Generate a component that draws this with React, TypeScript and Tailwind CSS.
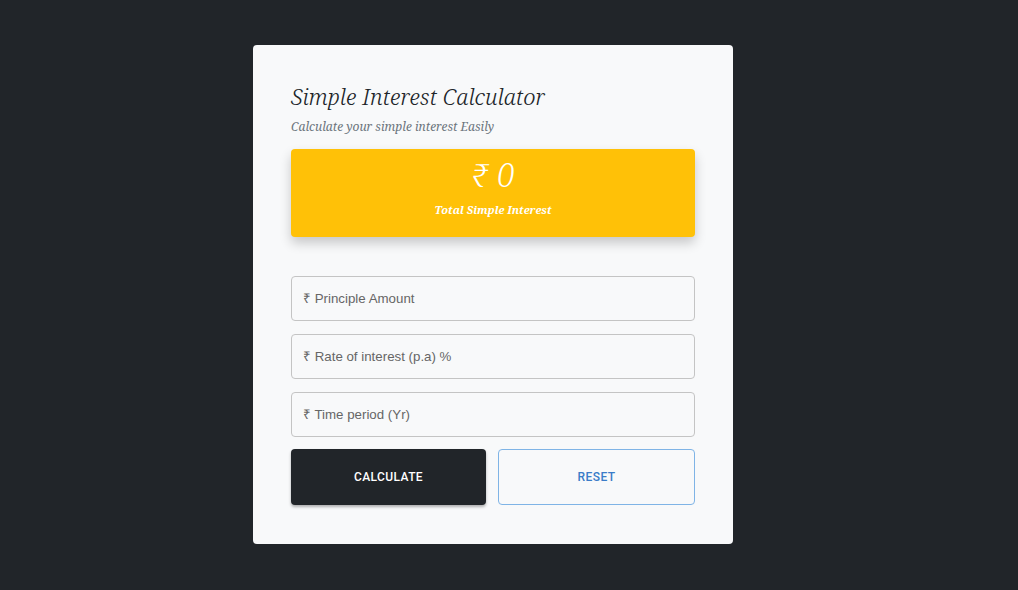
import React from "react";

export default function App() {
  const serif = { fontFamily: '"Noto Serif", "DejaVu Serif", serif', fontStretch: "87.5%" };
  return (
    <div className="min-h-[590px] w-full bg-[#212529] flex justify-center pt-[45px] pr-[32px]" style={{ fontFamily: 'Roboto, "Liberation Sans", sans-serif' }}>
      <div className="w-[480px] h-[499px] bg-[#f8f9fa] rounded-[4px] px-[38px] pt-[37px]">
        <h1 className="italic text-[22.4px] leading-[30px] text-[#212529] font-light" style={serif}>Simple Interest Calculator</h1>
        <p className="italic text-[12px] leading-[18px] mt-[6px] text-[#6c757d]" style={serif}>Calculate your simple interest Easily</p>
        <div className="mt-[13px] h-[88px] bg-[#ffc107] rounded-[4px] shadow-[0_6px_12px_rgba(0,0,0,0.2)] flex flex-col items-center text-white">
          <div className="italic font-light text-[32px] leading-[40px] mt-[6px]" style={{ fontFamily: '"Noto Serif", "DejaVu Serif", serif' }}>₹ 0</div>
          <div className="italic font-bold text-[11px] leading-[18px] mt-[6px]" style={serif}>Total Simple Interest</div>
        </div>
        <div className="mt-[39px] flex flex-col gap-[13px]">
          {["₹ Principle Amount", "₹ Rate of interest (p.a) %", "₹ Time period (Yr)"].map((t) => (
            <div key={t} className="h-[45px] border border-[#c4c4c4] rounded-[4px] flex items-center px-[11px] text-[13.3px] text-[#666]" style={{ fontFamily: '"Liberation Sans", Arial, sans-serif' }}>
              {t}
            </div>
          ))}
        </div>
        <div className="mt-[12px] flex gap-[12px]">
          <button className="flex-1 h-[56px] bg-[#212529] rounded-[4px] text-white text-[12px] font-medium tracking-[0.4px] shadow-[0_2px_3px_rgba(0,0,0,0.3)]">CALCULATE</button>
          <button className="flex-1 h-[56px] border border-[#7fb4e6] rounded-[4px] text-[#3a7cc8] text-[12px] font-medium tracking-[0.4px]">RESET</button>
        </div>
      </div>
    </div>
  );
}
